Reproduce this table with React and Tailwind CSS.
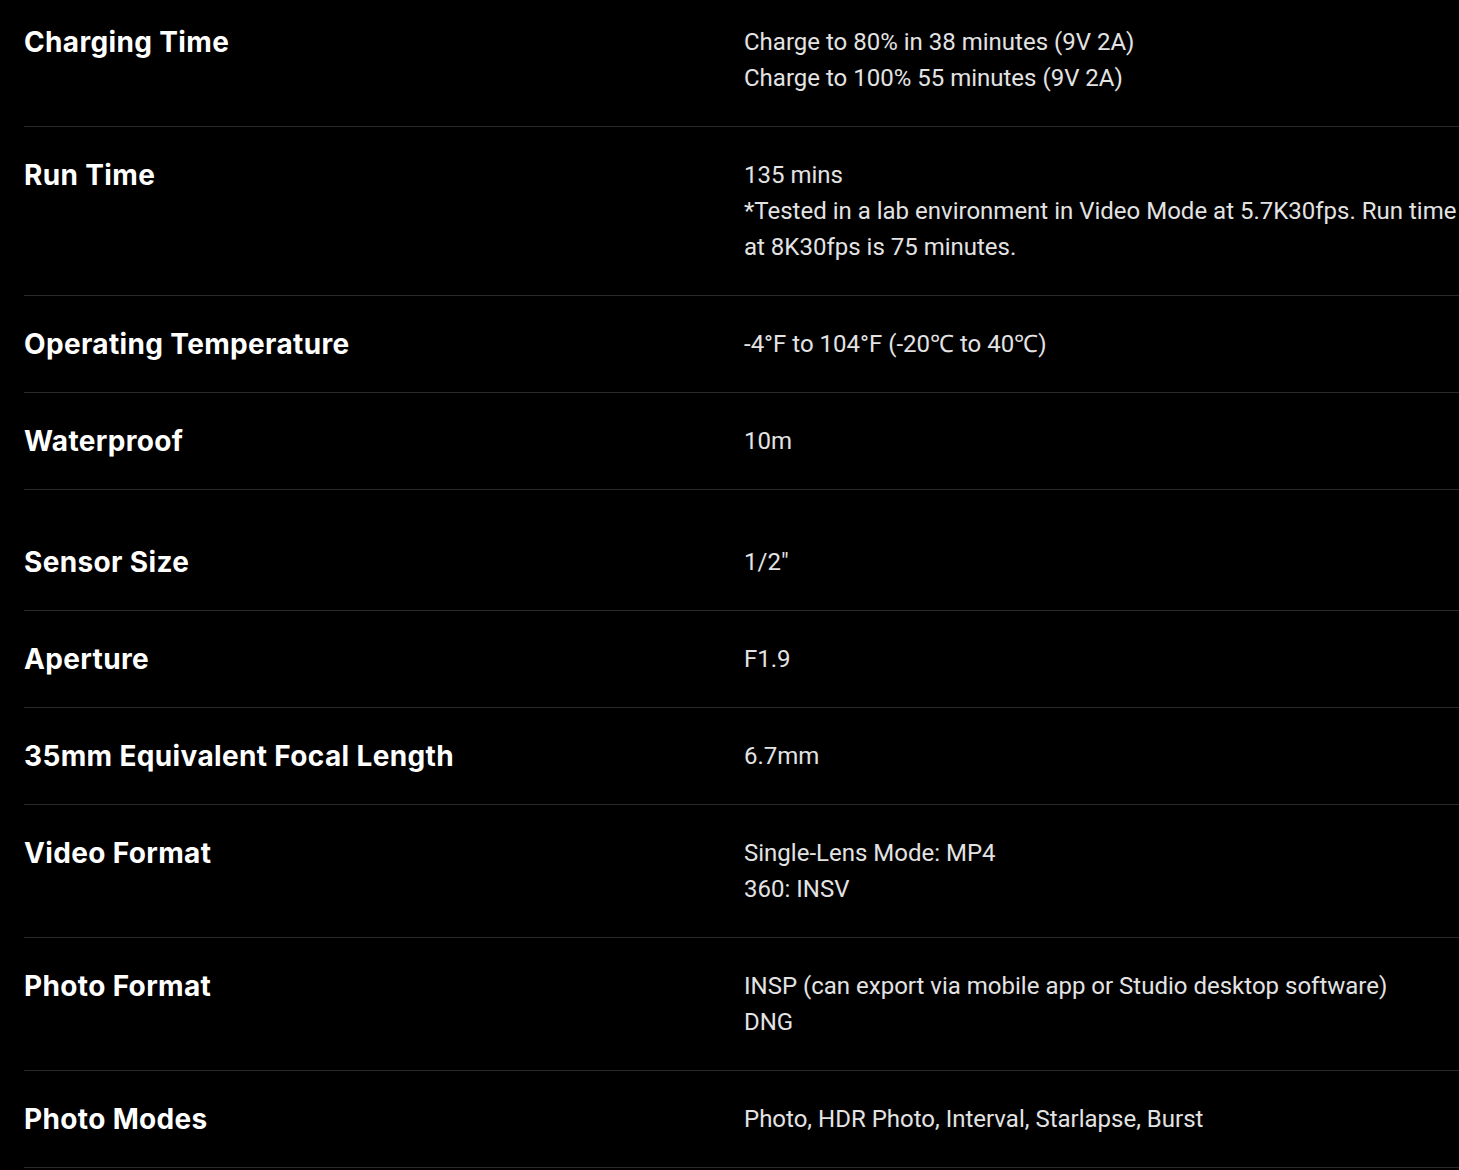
import React from 'react';

const specs = [
  { label: 'Charging Time', lines: ['Charge to 80% in 38 minutes (9V 2A)', 'Charge to 100% 55 minutes (9V 2A)'], first: true },
  { label: 'Run Time', lines: ['135 mins', '*Tested in a lab environment in Video Mode at 5.7K30fps. Run time at 8K30fps is 75 minutes.'] },
  { label: 'Operating Temperature', lines: ['-4°F to 104°F (-20℃ to 40℃)'] },
  { label: 'Waterproof', lines: ['10m'] },
  { label: 'Sensor Size', lines: ['1/2"'], gap: true },
  { label: 'Aperture', lines: ['F1.9'] },
  { label: '35mm Equivalent Focal Length', lines: ['6.7mm'] },
  { label: 'Video Format', lines: ['Single-Lens Mode: MP4', '360: INSV'] },
  { label: 'Photo Format', lines: ['INSP (can export via mobile app or Studio desktop software)', 'DNG'] },
  { label: 'Photo Modes', lines: ['Photo, HDR Photo, Interval, Starlapse, Burst'] },
];

const SpecRow = ({ label, lines, first, gap }) => (
  <div
    className={`flex border-b border-[#2a2a2a] pb-[30px] ${first ? 'pt-[24px]' : gap ? 'pt-[54px]' : 'pt-[30px]'}`}
  >
    <div className="w-[720px] shrink-0 pr-6">
      <h3 className="text-[28px] leading-[36px] font-bold text-white tracking-[0.35px]" style={{ fontFamily: 'Inter, "Open Sans", sans-serif' }}>
        {label}
      </h3>
    </div>
    <div className="w-[720px] shrink-0 text-[24px] leading-[36px] text-[#e3e3e3] font-['Roboto',sans-serif]">
      {lines.map((line, i) => (
        <p key={i}>{line}</p>
      ))}
    </div>
  </div>
);

export default function App() {
  return (
    <div className="min-h-[1170px] w-full overflow-hidden bg-black">
      <div className="ml-6 w-[1440px]">
        {specs.map((s) => (
          <SpecRow key={s.label} {...s} />
        ))}
      </div>
    </div>
  );
}
